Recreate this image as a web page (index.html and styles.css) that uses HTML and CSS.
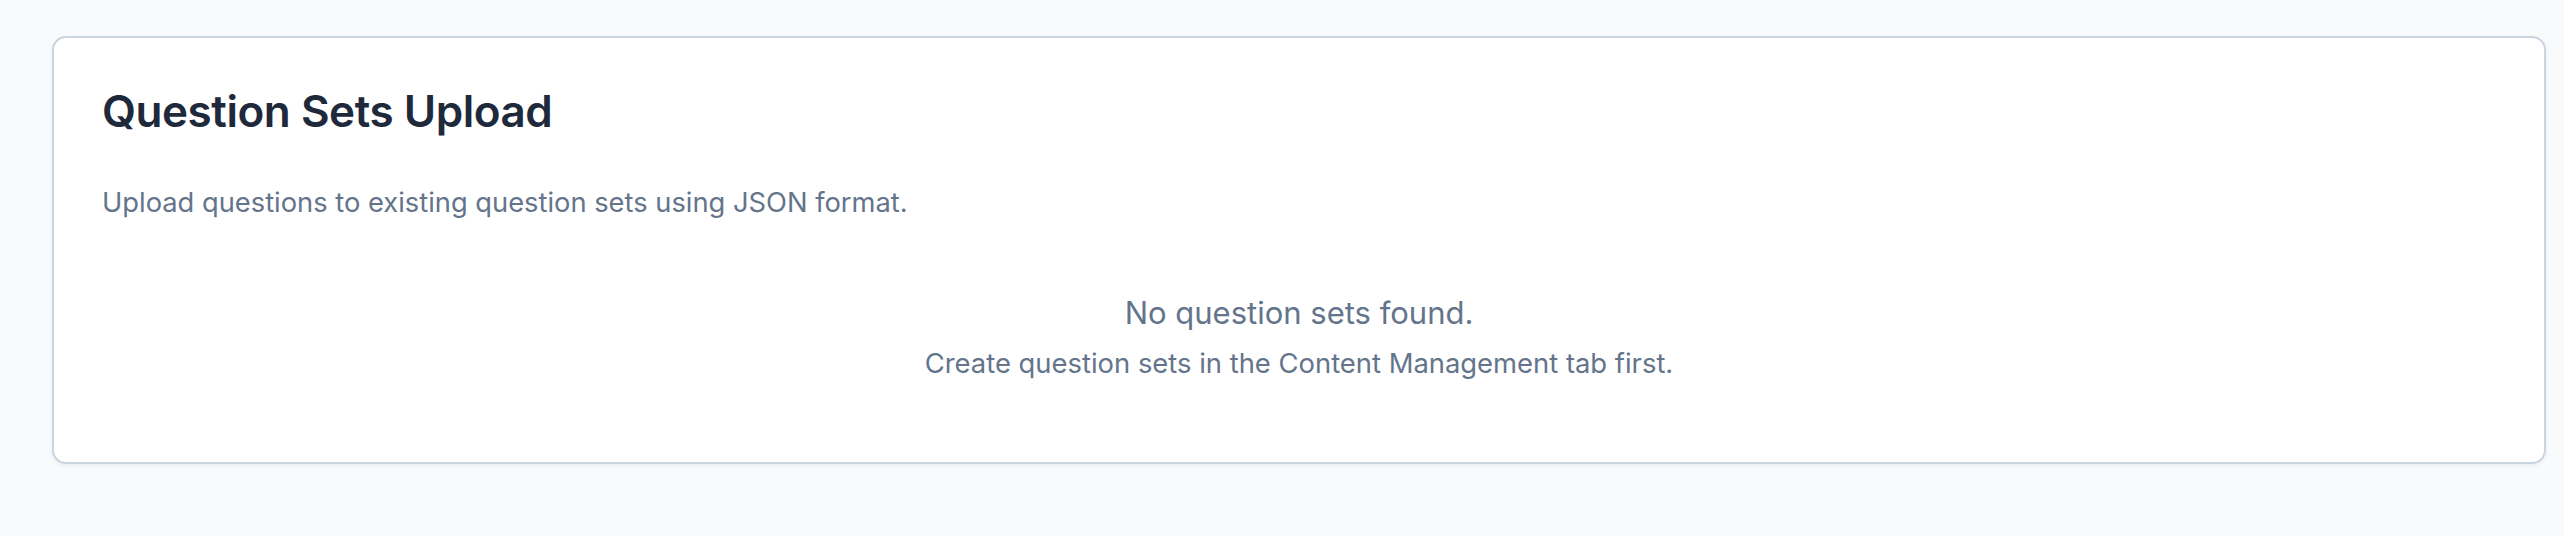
FILE: index.html
```html
<!DOCTYPE html>
<html lang="en">
<head>
<meta charset="utf-8">
<title>Question Sets Upload</title>
<link rel="stylesheet" href="styles.css">
</head>
<body>
<main class="page">
  <section class="card">
    <h1 class="card-title">Question Sets Upload</h1>
    <p class="card-desc">Upload questions to existing question sets using JSON format.</p>
    <div class="empty">
      <p class="empty-title">No question sets found.</p>
      <p class="empty-hint">Create question sets in the Content Management tab first.</p>
    </div>
  </section>
</main>
</body>
</html>
```

FILE: styles.css
```css
html, body {
  margin: 0;
  padding: 0;
  background: #f8fafc;
  font-family: Inter, "Noto Sans", sans-serif;
}

.page {
  padding: 36px 18px 40px 52px;
}

.card {
  background: #ffffff;
  border: 2px solid #cbd5e1;
  border-radius: 14px;
  box-shadow: 0 2px 4px rgba(15, 23, 42, 0.05);
  padding: 48px;
  height: 428px;
  box-sizing: border-box;
}

.card-title {
  margin: 0;
  font-size: 44px;
  font-weight: 600;
  letter-spacing: -0.45px;
  color: #1e293b;
  line-height: 50px;
}

.card-desc {
  margin: 47px 0 0 0;
  font-size: 27.3px;
  color: #64748b;
  line-height: 40px;
}

.empty {
  margin-top: 68px;
  text-align: center;
}

.empty-title {
  margin: 0;
  font-size: 31px;
  color: #64748b;
  line-height: 44px;
}

.empty-hint {
  margin: 8px 0 0 0;
  font-size: 27.4px;
  color: #64748b;
  line-height: 40px;
}
```
